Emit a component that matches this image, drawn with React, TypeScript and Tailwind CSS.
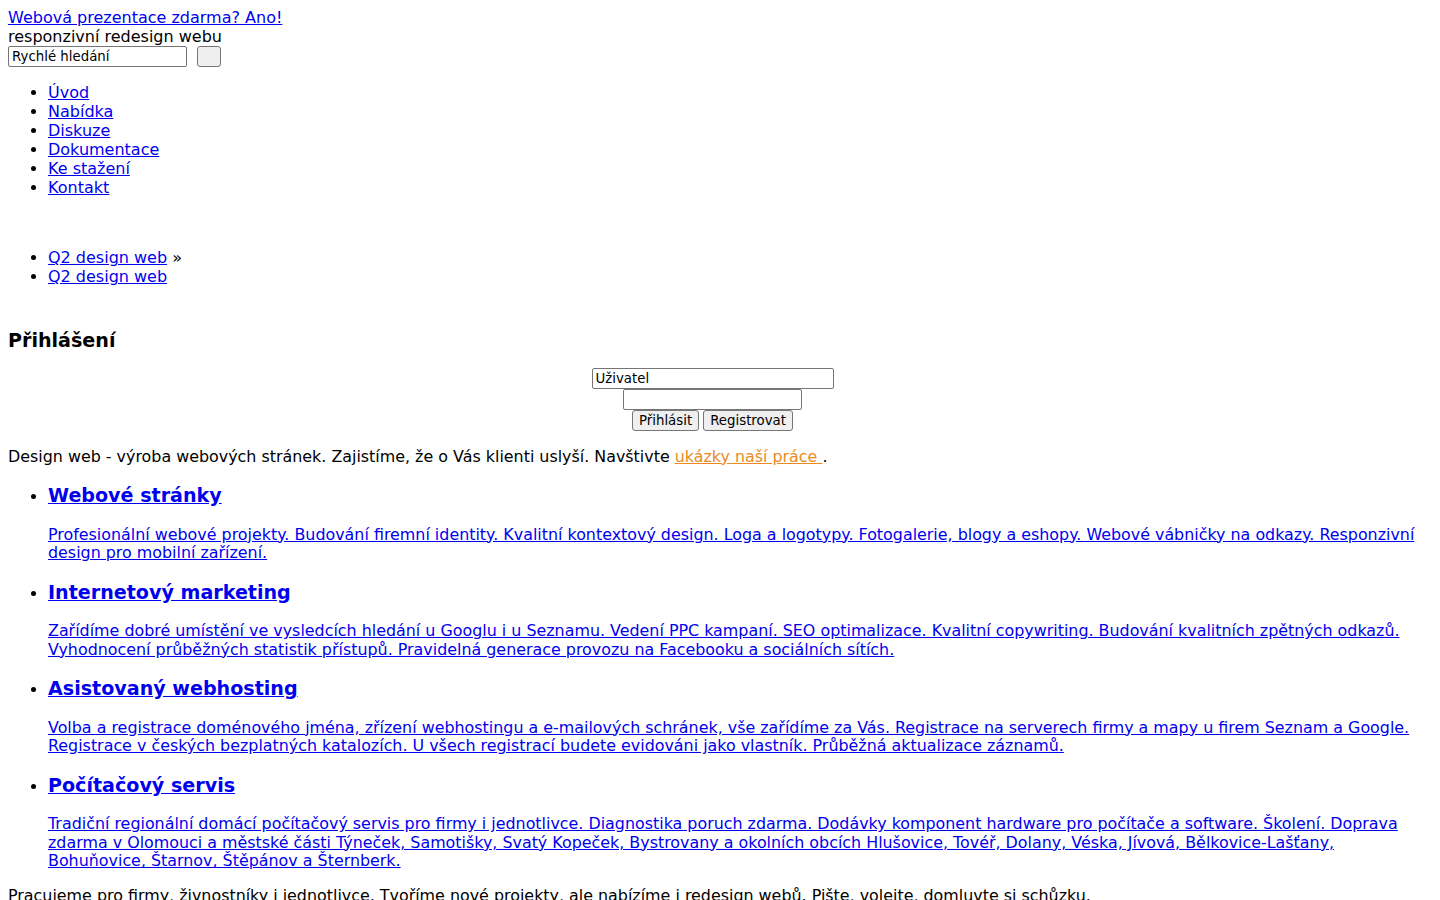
import React from 'react';

const link = 'text-[#0000ee] underline';
const field =
  'h-[21px] border border-[#767676] rounded-[2px] bg-white px-[3px] text-[13.33px] text-black leading-[normal] outline-none';
const btn =
  'h-[21px] border border-[#767676] rounded-[3px] bg-[#efefef] px-[6px] text-[13.33px] text-black leading-[normal]';
const heading = 'text-[19.1px] leading-[21.8px] font-bold';

const nav = ['Úvod', 'Nabídka', 'Diskuze', 'Dokumentace', 'Ke stažení', 'Kontakt'];

const services = [
  {
    title: 'Webové stránky',
    text: 'Profesionální webové projekty. Budování firemní identity. Kvalitní kontextový design. Loga a logotypy. Fotogalerie, blogy a eshopy. Webové vábničky na odkazy. Responzivní design pro mobilní zařízení.',
  },
  {
    title: 'Internetový marketing',
    text: 'Zařídíme dobré umístění ve vysledcích hledání u Googlu i u Seznamu. Vedení PPC kampaní. SEO optimalizace. Kvalitní copywriting. Budování kvalitních zpětných odkazů. Vyhodnocení průběžných statistik přístupů. Pravidelná generace provozu na Facebooku a sociálních sítích.',
  },
  {
    title: 'Asistovaný webhosting',
    text: 'Volba a registrace doménového jména, zřízení webhostingu a e-mailových schránek, vše zařídíme za Vás. Registrace na serverech firmy a mapy u firem Seznam a Google. Registrace v českých bezplatných katalozích. U všech registrací budete evidováni jako vlastník. Průběžná aktualizace záznamů.',
  },
  {
    title: 'Počítačový servis',
    text: 'Tradiční regionální domácí počítačový servis pro firmy i jednotlivce. Diagnostika poruch zdarma. Dodávky komponent hardware pro počítače a software. Školení. Doprava zdarma v Olomouci a městské části Týneček, Samotišky, Svatý Kopeček, Bystrovany a okolních obcích Hlušovice, Tovéř, Dolany, Véska, Jívová, Bělkovice-Lašťany, Bohuňovice, Štarnov, Štěpánov a Šternberk.',
  },
];

export default function App() {
  return (
    <div className="min-h-screen bg-white p-2 font-['DejaVu_Sans',sans-serif] text-base leading-[normal] text-black">
      {/* header */}
      <div>
        <a href="#" className={link}>Webová prezentace zdarma? Ano!</a>
      </div>
      <div>responzivní redesign webu</div>
      <form className="flex items-center gap-[10px]" onSubmit={(e) => e.preventDefault()}>
        <input type="text" defaultValue="Rychlé hledání" className={`${field} w-[179px]`} />
        <button type="submit" className={`${btn} w-[24px]`} />
      </form>

      {/* menu */}
      <ul className="mt-4 list-disc pl-10">
        {nav.map((n) => (
          <li key={n}>
            <a href="#" className={link}>{n}</a>
          </li>
        ))}
      </ul>

      {/* breadcrumbs */}
      <ul className="mt-[51px] list-disc pl-10">
        <li>
          <a href="#" className={link}>Q2 design web</a> »
        </li>
        <li>
          <a href="#" className={link}>Q2 design web</a>
        </li>
      </ul>

      <h3 className={`mt-[44px] ${heading}`}>Přihlášení</h3>

      <form className="mt-[16px] flex flex-col items-center pr-[15px]" onSubmit={(e) => e.preventDefault()}>
        <input type="text" defaultValue="Uživatel" className={`${field} w-[242px]`} />
        <input type="password" className={`${field} w-[179px]`} />
        <div className="flex gap-[4px]">
          <button type="submit" className={btn}>Přihlásit</button>
          <button type="button" className={btn}>Registrovat</button>
        </div>
      </form>

      {/* content */}
      <div className="text-[15.9px] leading-[18.63px]">
        <p className="mt-[17px]">
          Design web - výroba webových stránek. Zajistíme, že o Vás klienti uslyší. Navštivte{' '}
          <a href="#" className="text-[#e98b22] underline">ukázky naší práce </a>.
        </p>

        <ul className="list-disc pl-10">
          {services.map((s) => (
            <li key={s.title}>
              <h3 className={`my-[18.72px] ${heading}`}>
                <a href="#" className={link}>{s.title}</a>
              </h3>
              <p className="mb-4">
                <a href="#" className={link}>{s.text}</a>
              </p>
            </li>
          ))}
        </ul>

        <p className="mt-4">
          Pracujeme pro firmy, živnostníky i jednotlivce. Tvoříme nové projekty, ale nabízíme i redesign webů. Pište, volejte, domluvte si schůzku.
        </p>
      </div>
    </div>
  );
}
